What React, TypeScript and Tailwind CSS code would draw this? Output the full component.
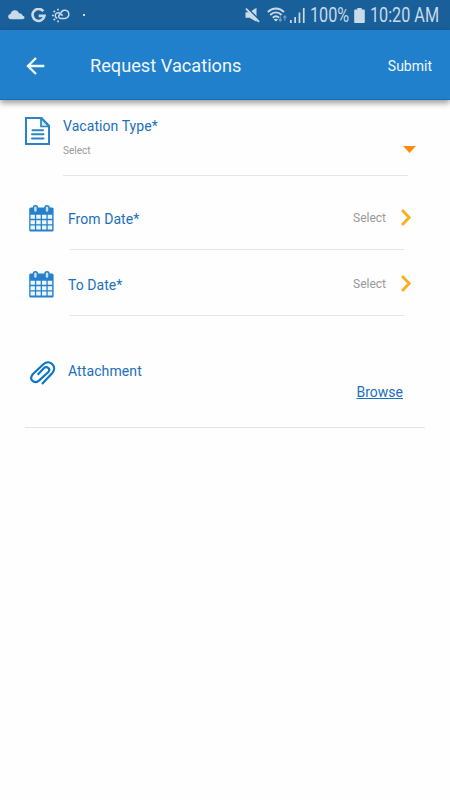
function CloudIcon() {
  return (
    <svg className="h-[10px] w-[17px]" viewBox="0 0 17 10" fill="currentColor">
      <path d="M3 9.2C1.2 9.2.2 8.1.2 6.7c0-1.5 1-2.5 2.4-2.6C3 1.9 4.6.3 6.9.3c2 0 3.5 1.1 4.1 3 2.2-.1 3.4 1 3.6 2.4 1.2.1 1.9.8 1.9 1.800s-.8 1.700-2 1.700z" />
    </svg>
  );
}

function GoogleIcon() {
  return (
    <svg className="h-[15px] w-[15px]" viewBox="0 0 15 15" fill="none" stroke="currentColor" strokeWidth="2.6">
      <path d="M12.3 3.2A6 6 0 1 0 13.5 7.9H7.7" />
    </svg>
  );
}

function WeatherIcon() {
  return (
    <svg className="h-[15px] w-[18px]" viewBox="0 0 18 15" fill="none" stroke="currentColor" strokeWidth="1.5">
      <path d="M5.300 10.300a2.900 2.900 0 1 1 3.100-4.600" />
      <path d="M10.500 7.700a2 2 0 1 0-2 2.700h4.600a4.100 4.100 0 1 0-4.400-5" />
      <path d="M6 .8v1.800M1.600 2.800l1.400 1.300M0 7.500h1.800M1.700 12.200 3 10.900M6 14.300v-1.800" strokeWidth="1.700" />
    </svg>
  );
}

function MuteIcon() {
  return (
    <svg className="h-[16px] w-[15px]" viewBox="0 0 15 16" fill="currentColor">
      <path d="M.5 5.300h4L11.500.8v14L4.500 10.700h-4z" />
      <path d="M2.400 1 15 13.600" className="stroke-[#195f99]" strokeWidth="1.5" />
      <path d="M1 1.600 14 14.800" stroke="currentColor" strokeWidth="1.9" />
    </svg>
  );
}

function WifiIcon() {
  return (
    <svg className="h-[16px] w-[20px]" viewBox="0 0 20 16" fill="none" stroke="currentColor" strokeWidth="1.9">
      <path d="M.8 5c4.700-4.700 11.500-4.700 16.200 0M3.200 8c3.400-3.300 8-3.300 11.400 0M5.800 10.700c2-1.900 4.200-1.900 6.200 0" />
      <path d="m6.700 12.400 2.200 2.100 2.100-2.100c-1.200-1-3-1-4.300 0z" fill="currentColor" stroke="none" />
      <path d="M13.300 9.500v4.500m-1.500-1.500 1.500 1.700 1.500-1.700M17.800 13.500V9m-1.500 1.600 1.500-1.700 1.500 1.700" strokeWidth="1.2" opacity=".5" />
    </svg>
  );
}

function SignalIcon() {
  return (
    <svg className="h-[15px] w-[15px]" viewBox="0 0 15 15" fill="currentColor">
      <path d="M0 12h1.700v3H0zM4.300 9H6v6H4.300zM8.600 4.500h1.700V15H8.600zM12.900 0h1.700v15h-1.700z" />
    </svg>
  );
}

function BatteryIcon() {
  return (
    <svg className="h-[15px] w-[11px]" viewBox="0 0 11 15" fill="currentColor">
      <path d="M3.300 0h4.400v1.600H10q.8 0 .8.8v11.800q0 .8-.8.8H1q-.8 0-.8-.8V2.400q0-.8.8-.8h2.300z" />
    </svg>
  );
}

function BackIcon() {
  return (
    <svg className="h-[18px] w-[19px]" viewBox="0 0 19 18" fill="none" stroke="currentColor" strokeWidth="2.4">
      <path d="M18.300 9H2.200M10 1 2 9l8 8" />
    </svg>
  );
}

function DocumentIcon() {
  return (
    <svg className="h-[28px] w-[25px]" viewBox="0 0 25 28" fill="none" stroke="#2a84c8" strokeWidth="2">
      <path d="M1 1h15.500L24 8.700V27H1z" />
      <path d="M16 1v8.500h8z" fill="#d5e8f7" strokeWidth="1.7" />
      <path d="M7.500 13.300h10.500M7 17.300h11.500M7 21.500h11.500" strokeLinecap="round" />
    </svg>
  );
}

function CalendarIcon() {
  return (
    <svg className="h-[27px] w-[25px]" viewBox="0 0 25 27">
      <rect x=".2" y="2.6" width="24.4" height="24" rx="1.5" fill="#2481ca" />
      <g fill="#edf5fc">
        <path d="M1.500 9.800h4.400v4H1.500zM7.200 9.800h4.500v4H7.200zM13 9.800h4.400v4H13zM18.700 9.800h4.500v4h-4.500z" />
        <path d="M1.500 15.200h4.400v4H1.500zM7.200 15.200h4.500v4H7.200zM13 15.200h4.400v4H13zM18.700 15.200h4.500v4h-4.500z" />
        <path d="M1.500 20.600h4.400v4H1.500zM7.200 20.600h4.500v4H7.200zM13 20.600h4.400v4H13zM18.700 20.600h4.500v4h-4.500z" />
      </g>
      <g fill="#c5def2" stroke="#2481ca" strokeWidth="1.5">
        <rect x="4.4" y=".8" width="4" height="6.8" rx="2" />
        <rect x="16" y=".8" width="4" height="6.8" rx="2" />
      </g>
    </svg>
  );
}

function PaperclipIcon() {
  return (
    <svg className="h-[26px] w-[26px]" viewBox="45 31 78 78" fill="none" stroke="#0f75c4" strokeWidth="6.5">
      <path d="M81 103 112 70C128 52 105 27 86 43L54 73C40 89 57 105 72 93L100 67C108 57 95 48 87 55L68 75" />
    </svg>
  );
}

function ChevronIcon() {
  return (
    <svg className="h-[17px] w-[10px]" viewBox="0 0 10 17" fill="none" stroke="#fbaf20" strokeWidth="2.8">
      <path d="m1 1 7.200 7.500L1 16" />
    </svg>
  );
}

function StatusBar() {
  return (
    <div className="flex h-[30px] items-center justify-between bg-[#195f99] pl-2 pr-[10px] text-[#c9dae8]">
      <div className="flex items-center">
        <CloudIcon />
        <div className="ml-[6px]">
          <GoogleIcon />
        </div>
        <div className="ml-[6px]">
          <WeatherIcon />
        </div>
        <div className="ml-[13px] h-[2px] w-[2px] bg-current" />
      </div>
      <div className="flex items-center">
        <MuteIcon />
        <div className="ml-[7px]">
          <WifiIcon />
        </div>
        <div className="ml-[3px]">
          <SignalIcon />
        </div>
        <div className="ml-[5px] w-[39px]">
          <p className="origin-left scale-x-[.83] whitespace-nowrap pt-[2px] text-[19.5px] leading-[30px]">100%</p>
        </div>
        <div className="ml-[5px]">
          <BatteryIcon />
        </div>
        <div className="ml-[5px] w-[70px]">
          <p className="origin-left scale-x-[.83] whitespace-nowrap pt-[2px] text-[19.5px] leading-[30px]">10:20 AM</p>
        </div>
      </div>
    </div>
  );
}

function Header() {
  return (
    <header className="flex h-[70px] items-center border-b border-[#176eb0] bg-[#2080cb] pl-[26px] pr-[18px] text-[#f0f7fd] shadow-[0_3px_6px_rgba(0,0,0,0.4)]">
      <div className="pt-[2px]">
        <BackIcon />
      </div>
      <h1 className="ml-[45px] flex-1 pt-[2px] text-[18.2px]">Request Vacations</h1>
      <button className="pt-[4px] text-[14px]">Submit</button>
    </header>
  );
}

function DateRow({ label }: { label: string }) {
  return (
    <div className="h-[66px]">
      <div className="flex h-[44px] pl-[29px] pr-[39px]">
        <CalendarIcon />
        <p className="ml-[14px] flex-1 pt-[4px] text-[14px] leading-5 tracking-[.05px] text-[#1b6fbd]">{label}</p>
        <p className="pt-[3px] text-[12px] leading-5 text-[#999]">Select</p>
        <div className="ml-[15px] pt-[4px]">
          <ChevronIcon />
        </div>
      </div>
      <div className="ml-[70px] w-[334px] border-b border-[#e6e6e6]" />
    </div>
  );
}

export default function App() {
  return (
    <div className="h-[800px] w-[450px] overflow-hidden bg-[#fefefe] font-[Roboto,sans-serif]">
      <StatusBar />
      <Header />
      <main>
        <div className="flex h-[76px] pl-[25px] pt-[17px]">
          <DocumentIcon />
          <div className="ml-[13px] w-[345px] border-b border-[#e6e6e6]">
            <p className="text-[14px] leading-[18px] tracking-[.07px] text-[#1b6fbd]">Vacation Type*</p>
            <div className="-mr-[8px] mt-2 flex items-center justify-between">
              <p className="text-[10px] leading-[15px] text-[#999]">Select</p>
              <svg className="-mt-[2px] h-[7px] w-[13px]" viewBox="0 0 13 7" fill="#fa8c12">
                <path d="M0 0h13L6.500 7z" />
              </svg>
            </div>
          </div>
        </div>

        <div className="pt-[29px]">
          <DateRow label="From Date*" />
          <DateRow label="To Date*" />
        </div>

        <div className="mx-[25px] flex h-[91px] border-b border-[#e2e2e2]">
          <div className="ml-[5px] pt-[23px]">
            <PaperclipIcon />
          </div>
          <p className="ml-[12px] flex-1 pt-[24px] text-[14px] leading-5 tracking-[.1px] text-[#1b6fbd]">Attachment</p>
          <a className="mr-[22px] pt-[45px] text-[14px] leading-5 text-[#1b6fbd] underline">Browse</a>
        </div>
      </main>
    </div>
  );
}
